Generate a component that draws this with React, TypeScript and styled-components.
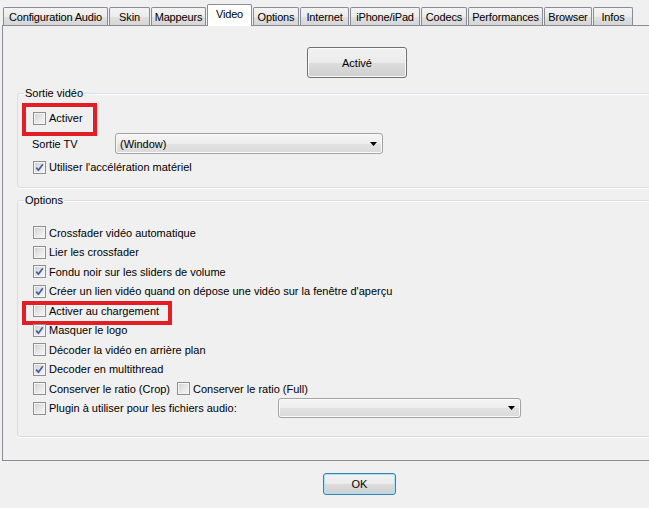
import React from "react";
import styled, { createGlobalStyle } from "styled-components";

const GlobalStyle = createGlobalStyle`
  html, body { margin: 0; padding: 0; background: #f0f0f0; }
  body {
    font-family: "Liberation Sans", Arial, sans-serif;
    font-size: 11px;
    color: #000;
  }
`;

const Window = styled.div`
  width: 649px;
  height: 508px;
  overflow: hidden;
  background: #f0f0f0;
  display: flex;
  flex-direction: column;
`;

const TabStrip = styled.div`
  position: relative;
  z-index: 1;
  display: flex;
  align-items: flex-end;
  gap: 1px;
  height: 25px;
  padding-left: 3px;
`;

const Tab = styled.div<{ $w: number; $active?: boolean }>`
  box-sizing: border-box;
  width: ${(p) => p.$w}px;
  height: ${(p) => (p.$active ? 22 : 18)}px;
  margin-bottom: ${(p) => (p.$active ? -1 : 0)}px;
  border: 1px solid #898c95;
  border-bottom: none;
  border-radius: 2px 2px 0 0;
  background: ${(p) =>
    p.$active
      ? "#ffffff"
      : "linear-gradient(#f3f3f3 0%, #ececec 50%, #e0e0e0 51%, #d6d6d6 100%)"};
  display: flex;
  align-items: center;
  justify-content: center;
  padding-bottom: ${(p) => (p.$active ? 4 : 0)}px;
  white-space: nowrap;
  letter-spacing: -0.15px;
`;

const Panel = styled.div`
  box-sizing: border-box;
  width: 690px;
  height: 436px;
  margin-left: 2px;
  border: 1px solid #898c95;
  padding-top: 21px;
  display: flex;
  flex-direction: column;
  align-items: flex-start;
`;

const PushButton = styled.div<{ $w: number; $h: number; $default?: boolean }>`
  box-sizing: border-box;
  width: ${(p) => p.$w}px;
  height: ${(p) => p.$h}px;
  border: 1px solid ${(p) => (p.$default ? "#3c7fb1" : "#707070")};
  border-radius: 3px;
  background: linear-gradient(#f2f2f2 0%, #ebebeb 50%, #dddddd 51%, #cfcfcf 100%);
  box-shadow: inset 0 0 0 1px ${(p) => (p.$default ? "#a8e3f9" : "#fbfbfb")};
  display: flex;
  align-items: center;
  justify-content: center;
`;

const TopButtonRow = styled.div`
  padding-left: 304px;
`;

const Group = styled.div<{ $mt: number; $pt: number; $pb: number }>`
  position: relative;
  box-sizing: border-box;
  width: 670px;
  margin-left: 14px;
  margin-top: ${(p) => p.$mt}px;
  padding: ${(p) => p.$pt}px 0 ${(p) => p.$pb}px 15px;
  border: 1px solid #d5dfe5;
  border-radius: 3px;
  box-shadow: inset 0 1px 0 #ffffff, 0 1px 0 #ffffff;
  display: flex;
  flex-direction: column;
`;

const Legend = styled.span`
  position: absolute;
  top: -8px;
  left: 6px;
  padding: 0 1px;
  line-height: 14px;
  background: #f0f0f0;
`;

const Row = styled.div<{ $h: number; $mt?: number }>`
  position: relative;
  display: flex;
  align-items: center;
  height: ${(p) => p.$h}px;
  margin-top: ${(p) => p.$mt ?? 0}px;
  white-space: nowrap;
`;

const CheckItem = styled.label<{ $w?: number }>`
  display: flex;
  align-items: center;
  gap: 3px;
  width: ${(p) => (p.$w ? `${p.$w}px` : "auto")};
`;

const Box = styled.span`
  box-sizing: border-box;
  width: 13px;
  height: 13px;
  border: 1px solid #8e8f8f;
  background: linear-gradient(135deg, #cdcdcd 0%, #e6e6e6 50%, #f7f7f7 100%);
  box-shadow: inset 0 0 0 1px #f4f4f4;
  display: flex;
  align-items: center;
  justify-content: center;
  flex: none;
`;

const FieldLabel = styled.span<{ $w: number }>`
  width: ${(p) => p.$w}px;
  margin-left: -1px;
`;

const Combo = styled.div<{ $w: number; $h: number }>`
  box-sizing: border-box;
  width: ${(p) => p.$w}px;
  height: ${(p) => p.$h}px;
  border: 1px solid #a3a3a3;
  border-radius: 3px;
  background: linear-gradient(#f5f5f5 0%, #ededed 50%, #e2e2e2 51%, #dadada 100%);
  box-shadow: inset 0 0 0 1px #fafafa;
  display: flex;
  align-items: center;
  justify-content: space-between;
  padding: 0 5px 0 4px;
`;

const Highlight = styled.div<{ $l: number; $t: number; $w: number; $h: number }>`
  position: absolute;
  box-sizing: border-box;
  left: ${(p) => p.$l}px;
  top: ${(p) => p.$t}px;
  width: ${(p) => p.$w}px;
  height: ${(p) => p.$h}px;
  border: 4px solid #e31e24;
  pointer-events: none;
`;

const BottomBar = styled.div`
  padding: 12px 0 0 323px;
`;

const Check = ({ checked }: { checked?: boolean }) => (
  <Box>
    {checked && (
      <svg width="11" height="11" viewBox="0 0 11 11">
        <path
          d="M2.2 5.6 L4.4 8.3 L8.8 2.2"
          fill="none"
          stroke="#43609c"
          strokeWidth="1.7"
          strokeLinejoin="round"
        />
      </svg>
    )}
  </Box>
);

const Arrow = () => (
  <svg width="7" height="4" viewBox="0 0 7 4">
    <path d="M0 0 H7 L3.5 4 Z" fill="#000" />
  </svg>
);

const tabs: { label: string; w: number; active?: boolean }[] = [
  { label: "Configuration Audio", w: 105 },
  { label: "Skin", w: 41 },
  { label: "Mappeurs", w: 55 },
  { label: "Video", w: 45, active: true },
  { label: "Options", w: 46 },
  { label: "Internet", w: 49 },
  { label: "iPhone/iPad", w: 70 },
  { label: "Codecs", w: 46 },
  { label: "Performances", w: 75 },
  { label: "Browser", w: 48 },
  { label: "Infos", w: 40 },
];

const options: { label: string; checked?: boolean; mark?: boolean }[] = [
  { label: "Crossfader vidéo automatique" },
  { label: "Lier les crossfader" },
  { label: "Fondu noir sur les sliders de volume", checked: true },
  { label: "Créer un lien vidéo quand on dépose une vidéo sur la fenêtre d'aperçu", checked: true },
  { label: "Activer au chargement", mark: true },
  { label: "Masquer le logo", checked: true },
  { label: "Décoder la vidéo en arrière plan" },
  { label: "Decoder en multithread", checked: true },
];

export default function App() {
  return (
    <>
      <GlobalStyle />
      <Window>
        <TabStrip>
          {tabs.map((t) => (
            <Tab key={t.label} $w={t.w} $active={t.active}>
              {t.label}
            </Tab>
          ))}
        </TabStrip>
        <Panel>
          <TopButtonRow>
            <PushButton $w={100} $h={31}>Activé</PushButton>
          </TopButtonRow>

          <Group $mt={15} $pt={14} $pb={10}>
            <Legend>Sortie vidéo</Legend>
            <Row $h={20}>
              <CheckItem>
                <Check />
                <span>Activer</span>
              </CheckItem>
              <Highlight $l={-11} $t={-5} $w={75} $h={33} />
            </Row>
            <Row $h={21} $mt={5}>
              <FieldLabel $w={83}>Sortie TV</FieldLabel>
              <Combo $w={268} $h={21}>
                <span>(Window)</span>
                <Arrow />
              </Combo>
            </Row>
            <Row $h={20} $mt={3}>
              <CheckItem>
                <Check checked />
                <span>Utiliser l'accélération matériel</span>
              </CheckItem>
            </Row>
          </Group>

          <Group $mt={12} $pt={22} $pb={18}>
            <Legend>Options</Legend>
            {options.map((o) => (
              <Row key={o.label} $h={19.5}>
                <CheckItem>
                  <Check checked={o.checked} />
                  <span>{o.label}</span>
                </CheckItem>
                {o.mark && <Highlight $l={-11} $t={0} $w={150} $h={24} />}
              </Row>
            ))}
            <Row $h={19.5}>
              <CheckItem $w={144}>
                <Check />
                <span>Conserver le ratio (Crop)</span>
              </CheckItem>
              <CheckItem>
                <Check />
                <span>Conserver le ratio (Full)</span>
              </CheckItem>
            </Row>
            <Row $h={19.5}>
              <CheckItem $w={245}>
                <Check />
                <span>Plugin à utiliser pour les fichiers audio:</span>
              </CheckItem>
              <Combo $w={243} $h={20}>
                <span />
                <Arrow />
              </Combo>
            </Row>
          </Group>
        </Panel>
        <BottomBar>
          <PushButton $w={73} $h={22} $default>
            OK
          </PushButton>
        </BottomBar>
      </Window>
    </>
  );
}
